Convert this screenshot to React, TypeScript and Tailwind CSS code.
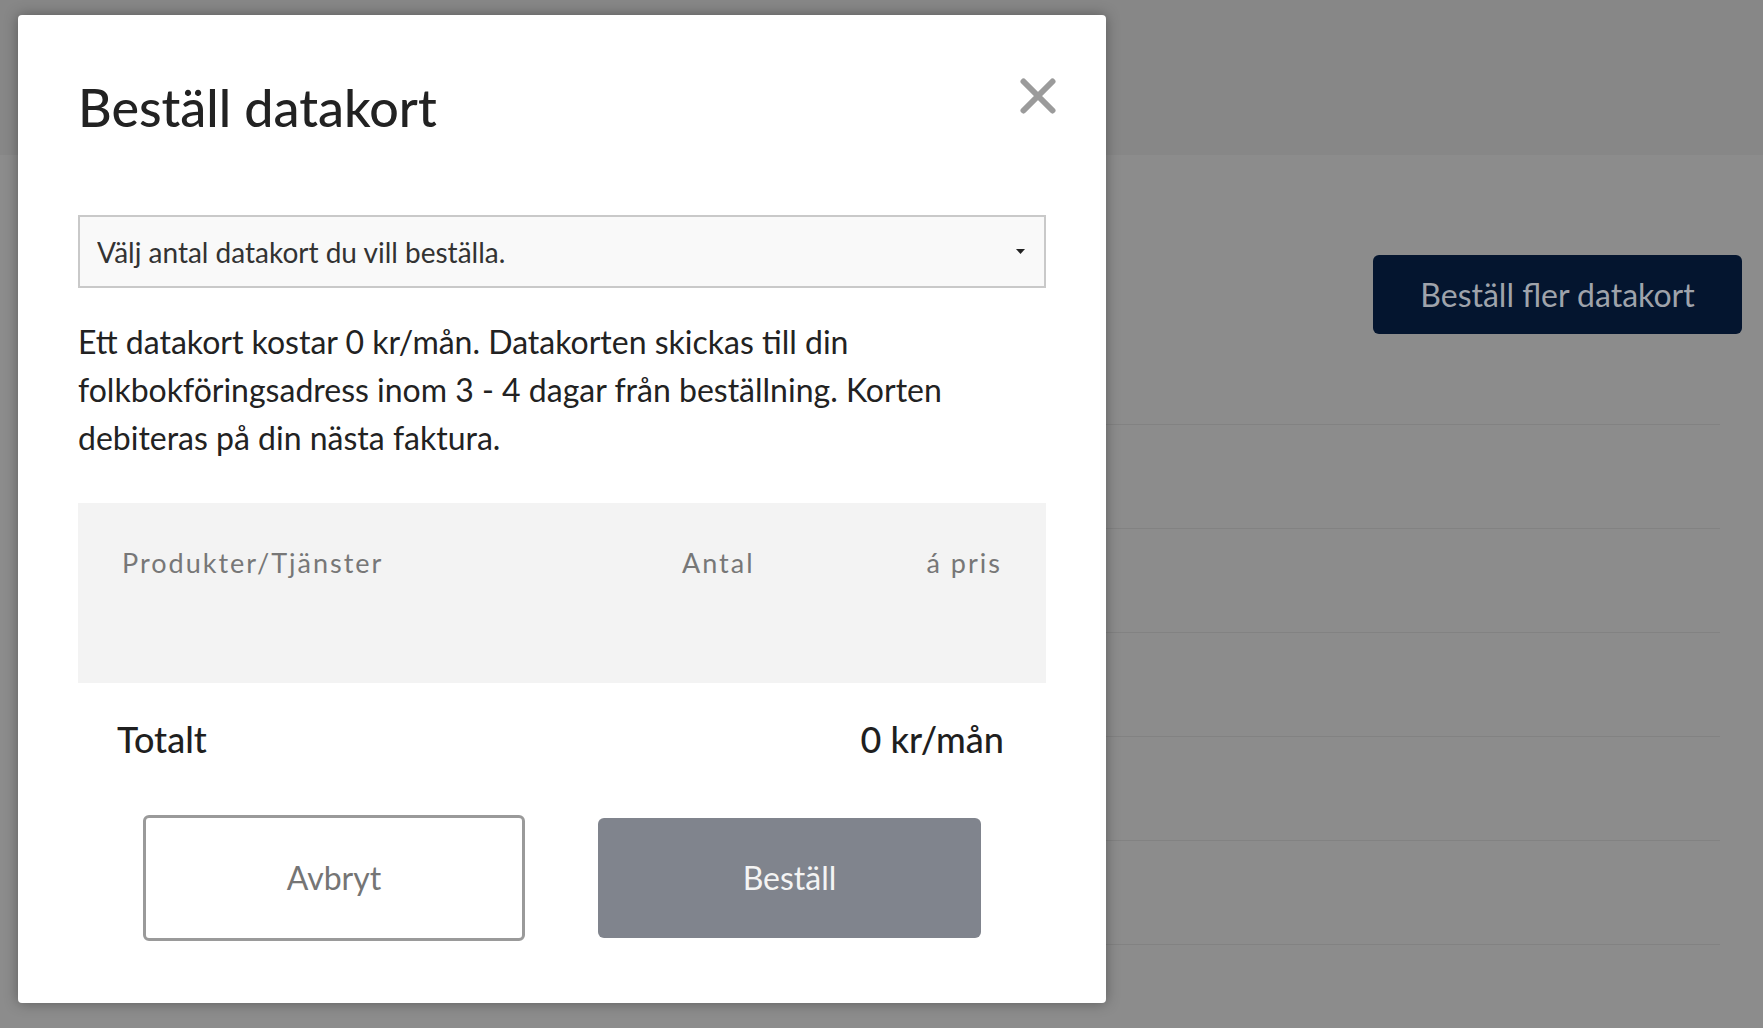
import { useState } from 'react';

const rows = [0, 1, 2, 3, 4, 5];

function CloseIcon() {
  return (
    <svg width="36" height="36" viewBox="0 0 36 36" fill="none">
      <path d="M3.5 3.5 L32.5 32.5 M32.5 3.5 L3.5 32.5" stroke="#9b9b9b" strokeWidth="6" strokeLinecap="round" />
    </svg>
  );
}

export default function App() {
  const [amount, setAmount] = useState('');

  return (
    <div className="relative min-h-screen w-full overflow-hidden bg-[#8c8c8c] font-['Lato','Liberation_Sans',sans-serif]">
      {/* Page behind the dialog (dimmed) */}
      <div className="h-[155px] bg-[#878787]" />
      <div className="flex justify-end pt-[100px] pr-[21px]">
        <button className="h-[79px] w-[369px] rounded-[6px] bg-[#04152f] text-[32px] text-[#9fa3ab]">
          Beställ fler datakort
        </button>
      </div>
      <div className="ml-[40px] mr-[43px] mt-[90px]">
        {rows.map((r) => (
          <div key={r} className="h-[104px] border-t border-[#828282]" />
        ))}
      </div>

      {/* Dialog */}
      <div className="absolute left-[18px] top-[15px] w-[1088px] h-[988px] rounded-[4px] bg-white px-[60px] pt-[65px] shadow-[0_0_14px_rgba(0,0,0,0.35)]">
        <div className="flex items-start justify-between">
          <h2 className="text-[52px] font-medium leading-[54px] text-[#222]">Beställ datakort</h2>
          <button className="-mt-[2px] -mr-[10px]">
            <CloseIcon />
          </button>
        </div>

        <div className="relative mt-[81px]">
          <select
            value={amount}
            onChange={(e) => setAmount(e.target.value)}
            className="h-[73px] w-full appearance-none border-2 border-[#c9c9c9] bg-[#f9f9f9] pl-[17px] text-[28px] text-[#333] outline-none"
          >
            <option value="">Välj antal datakort du vill beställa.</option>
            <option value="1">1</option>
            <option value="2">2</option>
            <option value="3">3</option>
          </select>
          <svg className="pointer-events-none absolute right-[21px] top-[34px]" width="9" height="5" viewBox="0 0 9 5">
            <path d="M0 0 L9 0 L4.5 5 Z" fill="#222" />
          </svg>
        </div>

        <p className="mt-[30px] text-[32px] leading-[48px] text-[#222]">
          Ett datakort kostar 0 kr/mån. Datakorten skickas till din folkbokföringsadress inom 3 - 4 dagar från beställning. Korten debiteras på din nästa faktura.
        </p>

        <div className="mt-[41px] h-[180px] bg-[#f3f3f3] px-[44px] pt-[42px]">
          <div className="grid grid-cols-[1fr_auto_auto] gap-x-[172px] text-[27px] leading-[36px] tracking-[2px] text-[#777]">
            <span>Produkter/Tjänster</span>
            <span>Antal</span>
            <span>á pris</span>
          </div>
        </div>

        <div className="mt-[29px] flex items-center justify-between pl-[39px] pr-[42px] text-[36px] font-medium text-[#1f1f1f]">
          <span>Totalt</span>
          <span>0 kr/mån</span>
        </div>

        <div className="mt-[49px] flex items-center justify-center gap-[73px]">
          <button className="h-[126px] w-[382px] rounded-[6px] border-[3px] border-[#9a9a9a] bg-white text-[32px] text-[#757575]">
            Avbryt
          </button>
          <button className="h-[120px] w-[383px] rounded-[6px] bg-[#80848d] text-[32px] text-[#f4f4f4]">
            Beställ
          </button>
        </div>
      </div>
    </div>
  );
}
